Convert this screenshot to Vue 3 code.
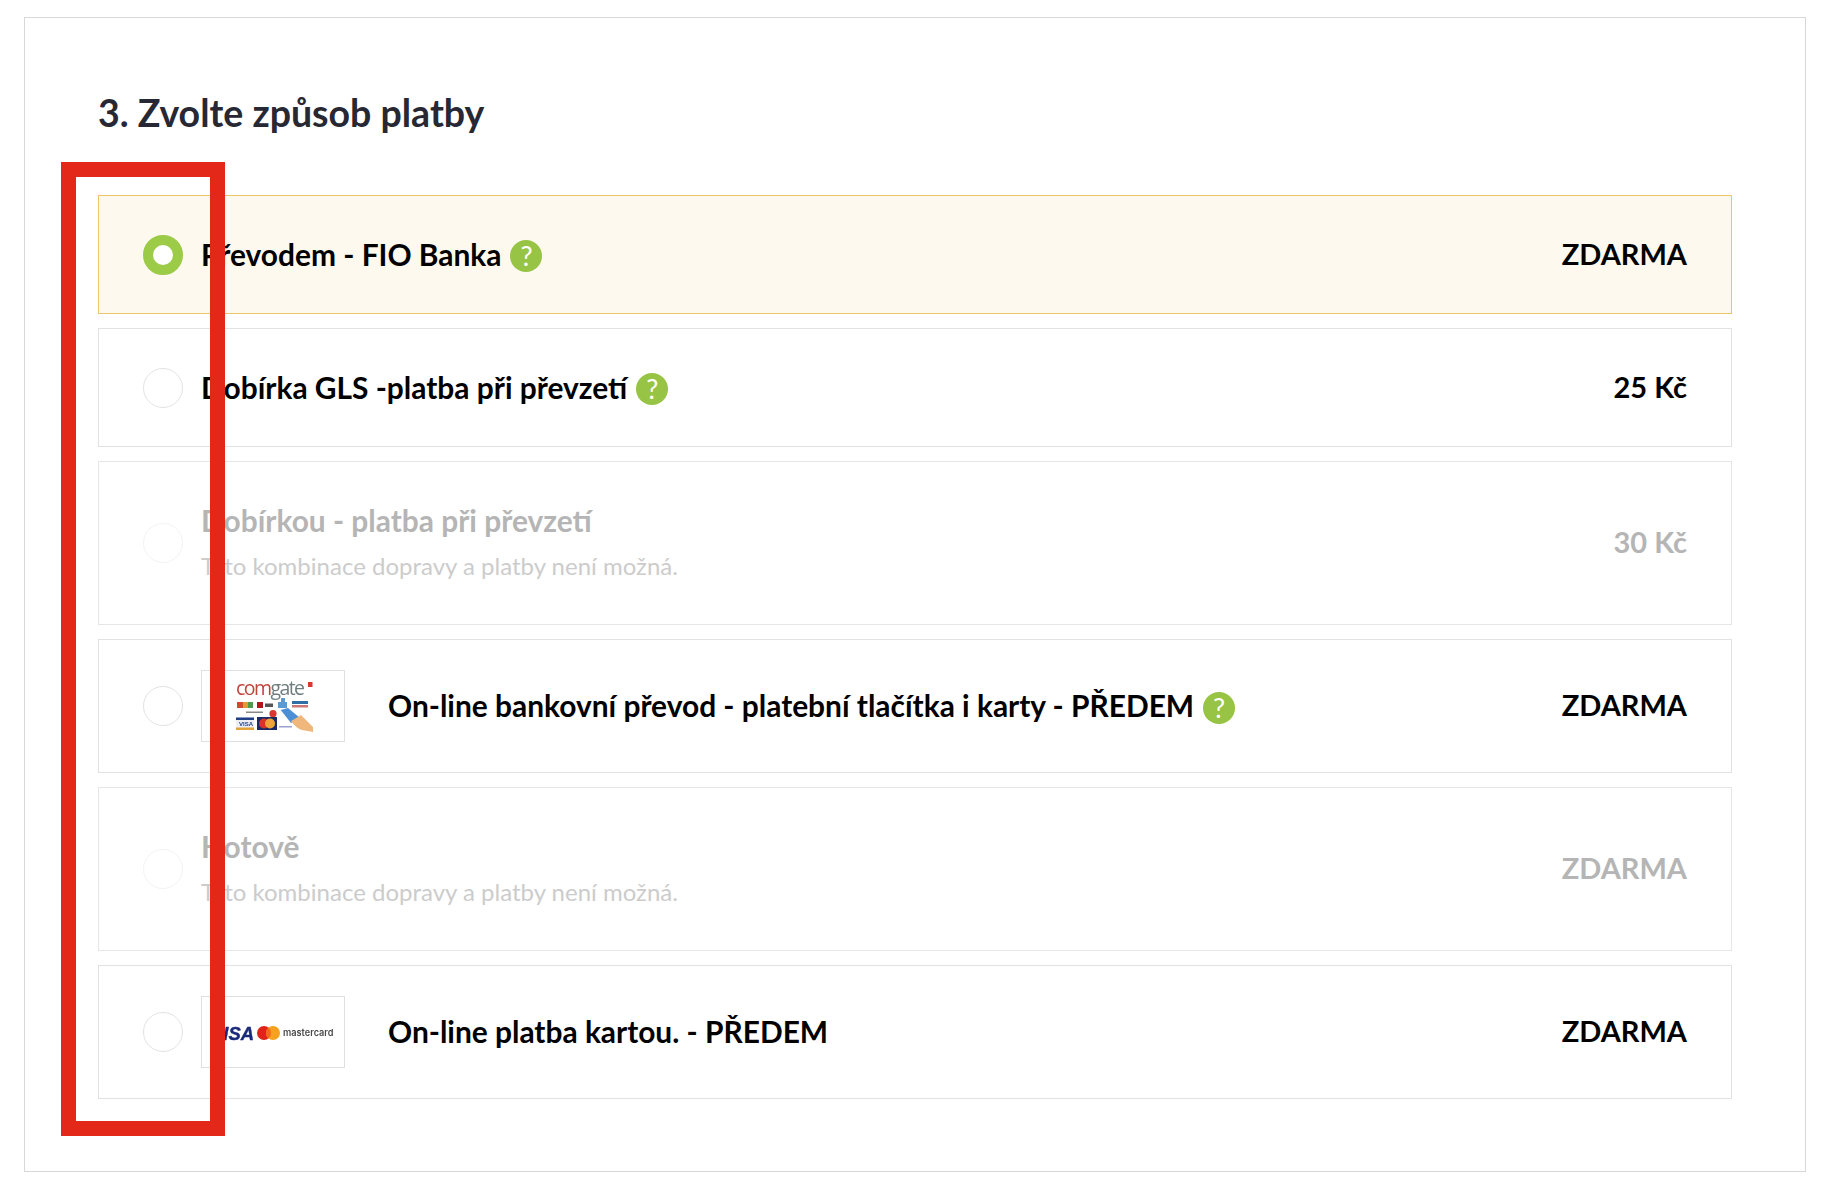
<script setup>
const rows = [
  { id: 1, title: 'Převodem - FIO Banka', price: 'ZDARMA', help: true, selected: true, kind: 'plain' },
  { id: 2, title: 'Dobírka GLS -platba při převzetí', price: '25 Kč', help: true, kind: 'plain' },
  { id: 3, title: 'Dobírkou - platba při převzetí', note: 'Tato kombinace dopravy a platby není možná.', price: '30 Kč', disabled: true, kind: 'note' },
  { id: 4, title: 'On-line bankovní převod - platební tlačítka i karty - PŘEDEM', price: 'ZDARMA', help: true, thumb: 'comgate', kind: 'thumb' },
  { id: 5, title: 'Hotově', note: 'Tato kombinace dopravy a platby není možná.', price: 'ZDARMA', disabled: true, kind: 'note' },
  { id: 6, title: 'On-line platba kartou. - PŘEDEM', price: 'ZDARMA', thumb: 'visa', kind: 'thumb' },
]
</script>

<template>
  <div class="page">
    <section class="panel">
      <h2 class="heading">3. Zvolte způsob platby</h2>
      <div class="list">
        <div
          v-for="row in rows"
          :key="row.id"
          class="row"
          :class="[`row-${row.kind}`, { selected: row.selected, disabled: row.disabled }]"
        >
          <span class="radio"></span>
          <div v-if="row.thumb" class="thumb">
            <svg v-if="row.thumb === 'comgate'" class="thumb-art" viewBox="1 1 142 70" width="142" height="70">
              <text x="35" y="25" textLength="69" lengthAdjust="spacing" class="cg-text"><tspan fill="#c0453c">com</tspan><tspan fill="#6f7d80">gate</tspan></text>
              <rect x="107" y="12" width="4.5" height="5" fill="#d8392c" />
              <rect x="36" y="32" width="6" height="6" fill="#d2492f" />
              <rect x="42" y="32" width="5" height="6" fill="#e39a35" />
              <rect x="47" y="32" width="5" height="6" fill="#4c9a4a" />
              <rect x="56" y="32" width="6" height="6" fill="#b3151b" />
              <rect x="64" y="33.5" width="8" height="3.5" fill="#555" />
              <rect x="77" y="32" width="9" height="6" fill="#5a9bd5" />
              <rect x="80" y="28" width="4" height="4" fill="#5a9bd5" />
              <rect x="91" y="31" width="16" height="3" fill="#2f6fa8" />
              <rect x="91" y="35" width="16" height="2.5" fill="#c77" />
              <rect x="45" y="41.5" width="17" height="1.5" fill="#888" />
              <circle cx="72" cy="43.7" r="3.6" fill="#d8392c" />
              <rect x="35" y="47.5" width="18" height="12.5" fill="#eceef4" />
              <rect x="35" y="47.5" width="18" height="2.5" fill="#1f3f86" />
              <rect x="35" y="57.5" width="18" height="2.5" fill="#e0a43a" />
              <text x="38" y="56" class="cg-visa">VISA</text>
              <rect x="56" y="47" width="20" height="13" fill="#1b2a66" />
              <circle cx="63" cy="53.5" r="5" fill="#d8322c" />
              <circle cx="69" cy="53.5" r="5" fill="#eea43a" />
              <path d="M79.7 40 L87 38 L99 48 L90 53 Z" fill="#4c8fd6" />
              <path d="M90 51 L97 47 L100 45 L112 57 L112 62 L101 60 C97 59 93 55 90 51 Z" fill="#efb77c" />
              <rect x="78" y="56" width="13" height="1.5" fill="#9aa0d0" />
            </svg>
            <svg v-else class="thumb-art" viewBox="1 1 142 70" width="142" height="70">
              <text x="10" y="44" textLength="43" lengthAdjust="spacingAndGlyphs" class="v-visa">VISA</text>
              <circle cx="63" cy="37" r="7" fill="#e2231a" />
              <circle cx="72" cy="37" r="7" fill="#f7a11e" />
              <path d="M67.5 31.6 a7 7 0 0 1 0 10.8 a7 7 0 0 1 0 -10.8 Z" fill="#f06b1b" />
              <text x="82" y="40" class="v-mc">mastercard</text>
            </svg>
          </div>
          <div class="body">
            <div class="title-line">
              <span class="title">{{ row.title }}</span>
              <span v-if="row.help" class="help">?</span>
            </div>
            <div v-if="row.note" class="note">{{ row.note }}</div>
          </div>
          <div class="price">{{ row.price }}</div>
        </div>
      </div>
    </section>
    <div class="marker"></div>
  </div>
</template>

<style>
html, body { margin: 0; background: #fff; }
</style>

<style scoped>
.page {
  position: relative;
  box-sizing: border-box;
  width: 1830px;
  height: 1191px;
  padding: 17px 24px 19px;
  font-family: Lato, "Noto Sans", sans-serif;
  background: #fff;
}
.panel {
  box-sizing: border-box;
  width: 1782px;
  height: 1155px;
  border: 1px solid #d8d8d8;
  padding: 0 73px;
}
.heading {
  box-sizing: border-box;
  display: flex;
  align-items: center;
  height: 177px;
  margin: 0;
  padding-top: 12px;
  font-size: 37.5px;
  font-weight: 700;
  color: #272833;
}
.list {
  display: flex;
  flex-direction: column;
  gap: 14.12px;
}
.row {
  box-sizing: border-box;
  display: flex;
  align-items: center;
  border: 1px solid #e2e2e2;
  padding: 0 44px;
  color: #000;
}
.row-plain { height: 119px; }
.row-note { height: 164px; }
.row-thumb { height: 133.6px; }
.selected {
  background: #fdf9ef;
  border-color: #eec468;
}
.radio {
  box-sizing: border-box;
  flex: none;
  width: 40px;
  height: 40px;
  margin-right: 18px;
  border-radius: 50%;
  border: 1.5px solid #e3e3e3;
  background: #fff;
}
.selected .radio {
  border: 10px solid #9ccb48;
}
.thumb {
  box-sizing: border-box;
  flex: none;
  width: 144px;
  height: 72px;
  margin-right: 43px;
  border: 1px solid #e0e0e0;
  line-height: 0;
}
.thumb-art {
  filter: blur(0.4px);
}
.body {
  flex: 1;
  min-width: 0;
}
.row-note .body {
  padding-bottom: 5px;
}
.title-line {
  display: flex;
  align-items: center;
  gap: 9px;
}
.title, .price {
  font-weight: 700;
  line-height: 36px;
  padding-bottom: 2px;
}
.title {
  font-size: 29.9px;
}
.price {
  font-size: 29px;
}
.help {
  flex: none;
  width: 32px;
  height: 32px;
  margin-top: 3px;
  border-radius: 50%;
  background: #97c444;
  color: #fff;
  font-size: 27px;
  line-height: 32px;
  text-align: center;
}
.note {
  margin-top: 12px;
  font-size: 24px;
  line-height: 28px;
}
.disabled .title,
.disabled .price {
  color: #b5b5b5;
}
.disabled .note {
  color: #cccccc;
}
.disabled .radio {
  border-color: #f3f3f3;
}
.disabled {
  border-color: #e6e6e6;
}
.marker {
  position: absolute;
  left: 61px;
  top: 162px;
  box-sizing: border-box;
  width: 164px;
  height: 974px;
  border: 15px solid #e32718;
}
.cg-text {
  font-family: "Open Sans", sans-serif;
  font-size: 19.5px;
  font-weight: 500;
}
.cg-visa {
  font-family: "Liberation Sans", sans-serif;
  font-size: 6px;
  font-weight: 700;
  fill: #1f3f86;
}
.v-visa {
  font-family: "Liberation Sans", sans-serif;
  font-size: 19px;
  font-weight: 700;
  font-style: italic;
  fill: #1a2a7c;
  stroke: #1a2a7c;
  stroke-width: 0.4px;
}
.v-mc {
  font-family: Inter, sans-serif;
  font-size: 9.2px;
  font-weight: 600;
  fill: #4a4a4a;
}
</style>
